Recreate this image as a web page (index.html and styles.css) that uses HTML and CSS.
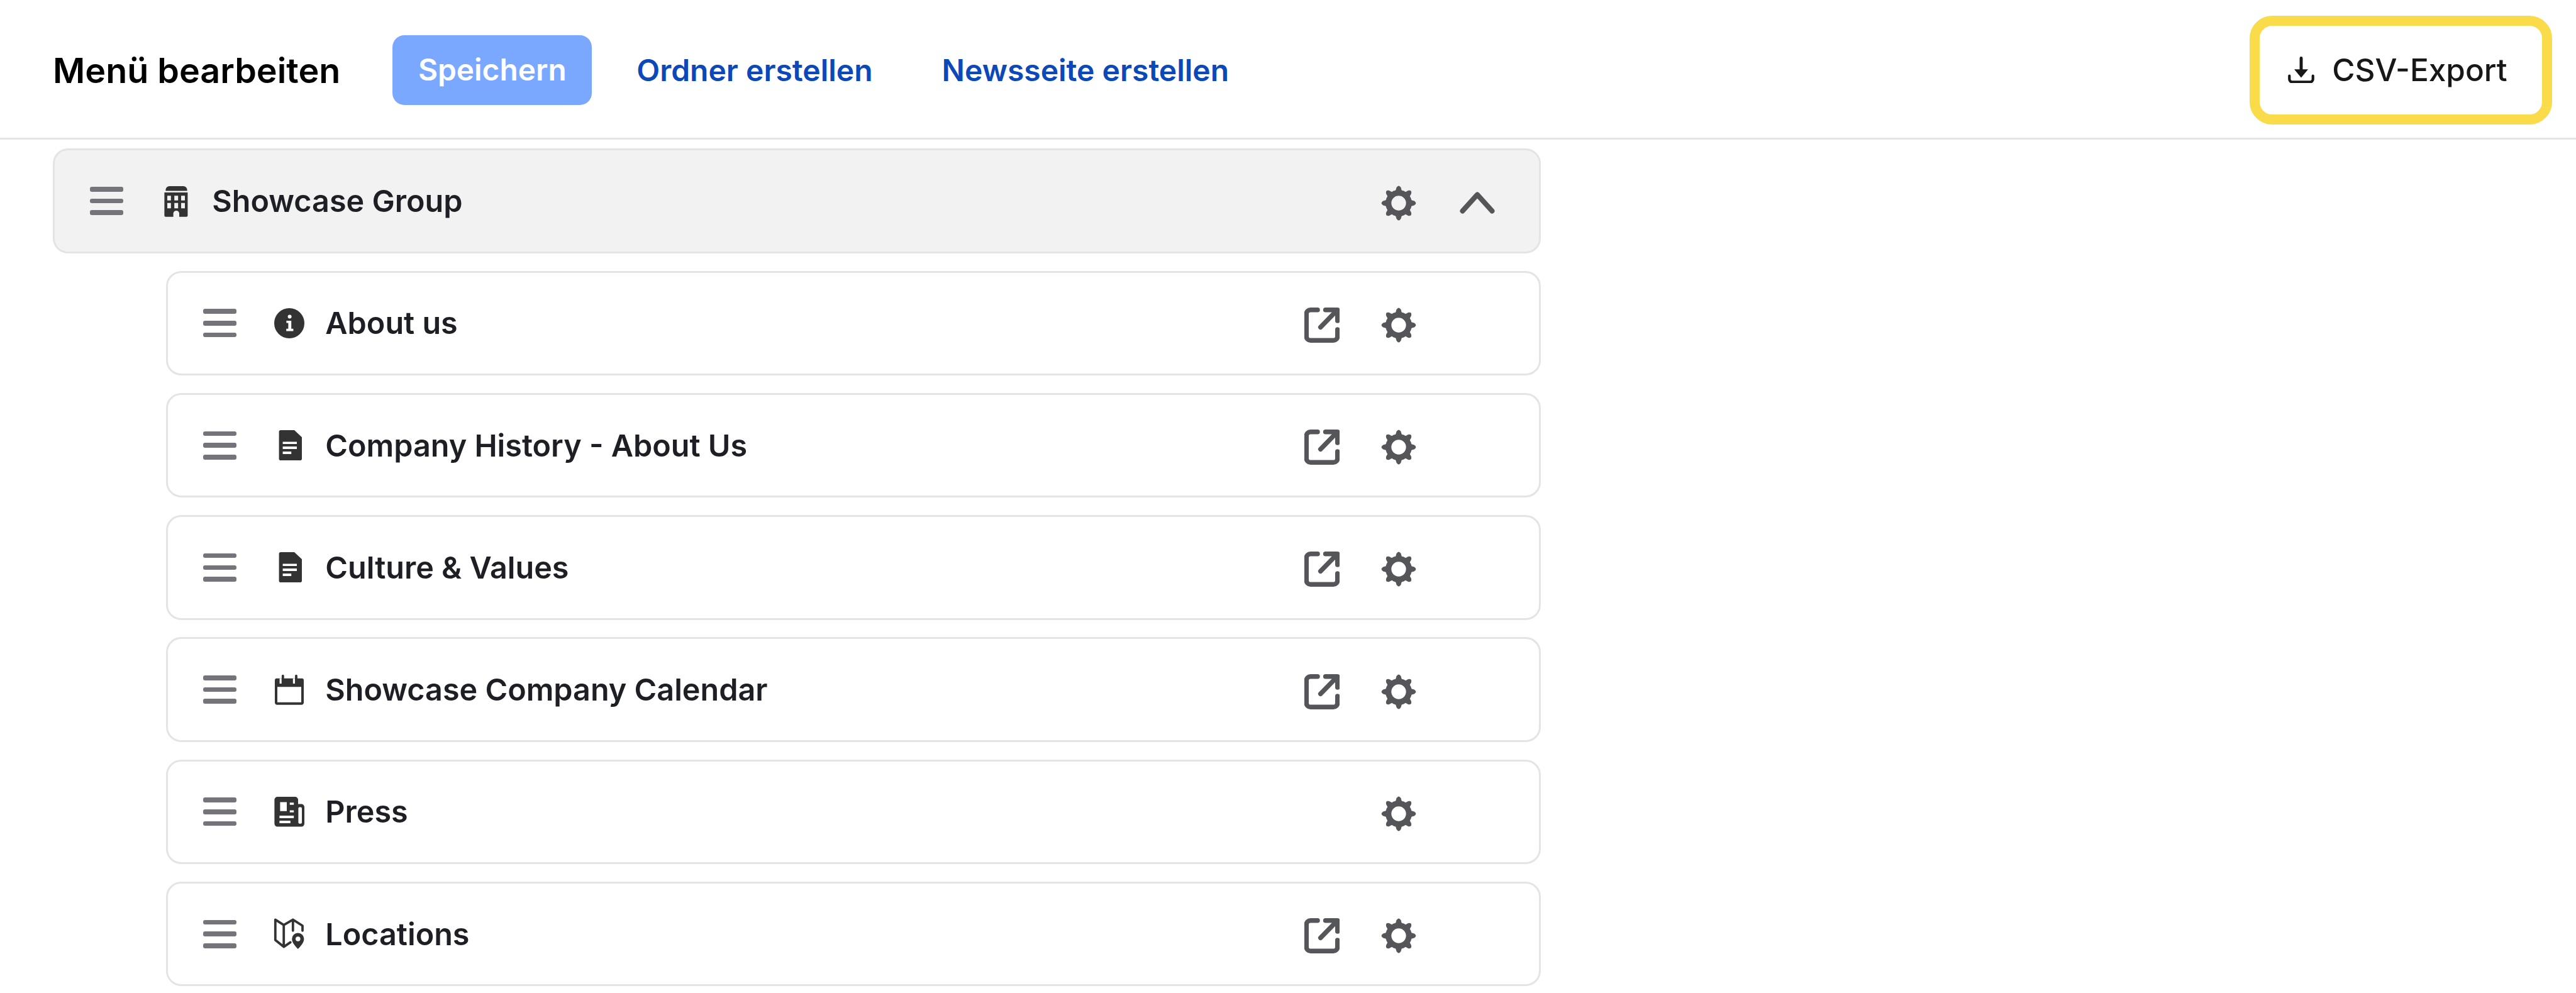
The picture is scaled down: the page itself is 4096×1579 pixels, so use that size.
FILE: index.html
```html
<!DOCTYPE html>
<html lang="de">
<head>
<meta charset="utf-8">
<title>Menü bearbeiten</title>
<link rel="stylesheet" href="styles.css">
</head>
<body>
<svg class="defs" aria-hidden="true">
  <symbol id="gear" viewBox="0 0 24 24">
    <path fill-rule="evenodd" d="M12 3a9 9 0 1 0 0 18a9 9 0 1 0 0-18zM12 7a5 5 0 1 1 0 10a5 5 0 1 1 0-10z"/>
    <g id="teeth">
      <path id="tooth" d="M9.5 4.8L10.5 1.4Q12-.9 13.5 1.4L14.5 4.8Z"/>
      <use href="#tooth" transform="rotate(45 12 12)"/>
      <use href="#tooth" transform="rotate(90 12 12)"/>
      <use href="#tooth" transform="rotate(135 12 12)"/>
      <use href="#tooth" transform="rotate(180 12 12)"/>
      <use href="#tooth" transform="rotate(225 12 12)"/>
      <use href="#tooth" transform="rotate(270 12 12)"/>
      <use href="#tooth" transform="rotate(315 12 12)"/>
    </g>
  </symbol>
  <symbol id="link" viewBox="0 0 24 24">
    <path class="line" d="M9 1.6H4.2A2.8 2.8 0 0 0 1.4 4.4V19.6A2.8 2.8 0 0 0 4.2 22.4H19.8A2.8 2.8 0 0 0 22.6 19.6V15M14.4 1.6H22.6V9M22.2 2L11 13.4"/>
  </symbol>
  <symbol id="doc" viewBox="0 0 24 24">
    <path d="M3.8 1.4A1.4 1.4 0 0 1 5.2 0H16L22 5.6V22.6A1.4 1.4 0 0 1 20.6 24H5.2A1.4 1.4 0 0 1 3.8 22.6Z"/>
    <path class="cut" d="M6.8 9.2H18V11H6.8ZM6.8 13H18V15H6.8ZM6.8 17H13.6V19H6.8Z"/>
  </symbol>
</svg>

<header class="topbar">
  <h1 class="title">Menü bearbeiten</h1>
  <button class="btn-save">Speichern</button>
  <a class="btn-link">Ordner erstellen</a>
  <a class="btn-link">Newsseite erstellen</a>
  <button class="btn-export">
    <svg class="ico-download" viewBox="0 0 24 24">
      <path class="tray" d="M1.3 17.5V20.6A2.4 2.4 0 0 0 3.7 23H20.3A2.4 2.4 0 0 0 22.7 20.6V17.5"/>
      <path d="M10.6 1.4A1.4 1.4 0 0 1 13.4 1.4V11.6H18.3L12 19.2L5.7 11.6H10.6Z"/>
    </svg>
    CSV-Export
  </button>
</header>

<main class="tree">
  <div class="row row-group">
    <span class="grip"><i></i><i></i><i></i></span>
    <svg class="ico" viewBox="0 0 24 24">
      <path d="M3.7 3.7V3A3 3 0 0 1 6.7 0H17.8A3 3 0 0 1 20.8 3V3.7Z"/>
      <path d="M2.7 5H21.2V23.4A1 1 0 0 1 20.2 24.4H14.5V21.8A2.35 2.35 0 0 0 9.8 21.8V24.4H3.7A1 1 0 0 1 2.7 23.4Z"/>
      <path class="cut" d="M5 7.6H7.9V11.4H5ZM10.6 7.6H13.6V11.4H10.6ZM16 7.6H19V11.4H16ZM5 13.4H7.9V17.6H5ZM10.6 13.4H13.6V17.6H10.6ZM16 13.4H19V17.6H16Z"/>
    </svg>
    <span class="label">Showcase Group</span>
    <span class="actions">
      <span class="slot"></span>
      <svg class="slot"><use href="#gear"/></svg>
      <span class="slot slot-chev">
        <svg class="ico-chev" viewBox="0 0 56 35"><path d="M4.5 30.5L28 4.5L51.5 30.5"/></svg>
      </span>
    </span>
  </div>

  <div class="row row-child">
    <span class="grip"><i></i><i></i><i></i></span>
    <svg class="ico" viewBox="0 0 24 24">
      <circle cx="12" cy="12" r="12"/>
      <circle class="cut" cx="12.3" cy="6.7" r="1.5"/>
      <path class="cut" d="M9.7 10H13.6V16.4H15.2V18.2H9.6V16.4H11.2V11.8H9.7Z"/>
    </svg>
    <span class="label">About us</span>
    <span class="actions">
      <svg class="slot"><use href="#link"/></svg>
      <svg class="slot"><use href="#gear"/></svg>
      <span class="slot"></span>
    </span>
  </div>

  <div class="row row-child">
    <span class="grip"><i></i><i></i><i></i></span>
    <svg class="ico"><use href="#doc"/></svg>
    <span class="label">Company History - About Us</span>
    <span class="actions">
      <svg class="slot"><use href="#link"/></svg>
      <svg class="slot"><use href="#gear"/></svg>
      <span class="slot"></span>
    </span>
  </div>

  <div class="row row-child">
    <span class="grip"><i></i><i></i><i></i></span>
    <svg class="ico"><use href="#doc"/></svg>
    <span class="label">Culture &amp; Values</span>
    <span class="actions">
      <svg class="slot"><use href="#link"/></svg>
      <svg class="slot"><use href="#gear"/></svg>
      <span class="slot"></span>
    </span>
  </div>

  <div class="row row-child">
    <span class="grip"><i></i><i></i><i></i></span>
    <svg class="ico" viewBox="0 0 24 24">
      <rect class="outline" x="1.5" y="4" width="21" height="18.9" rx="1"/>
      <path d="M.6 9.6V4A1.2 1.2 0 0 1 1.8 2.9H22.2A1.2 1.2 0 0 1 23.4 4V9.6Z"/>
      <path class="notch" d="M5.1 3V7M15.7 3V7"/>
      <path class="tab" d="M6.9.8V6.4M17.5.8V6.4"/>
    </svg>
    <span class="label">Showcase Company Calendar</span>
    <span class="actions">
      <svg class="slot"><use href="#link"/></svg>
      <svg class="slot"><use href="#gear"/></svg>
      <span class="slot"></span>
    </span>
  </div>

  <div class="row row-child">
    <span class="grip"><i></i><i></i><i></i></span>
    <svg class="ico" viewBox="0 0 24 24">
      <path d="M.2 2.4A2.4 2.4 0 0 1 2.6 0H16.6A2.4 2.4 0 0 1 19 2.4V5.8H21.6A2.4 2.4 0 0 1 24 8.2V21.4A2.4 2.4 0 0 1 21.6 23.8H2.6A2.4 2.4 0 0 1 .2 21.4Z"/>
      <path class="cut" d="M4.7 4.3H10V11.4H4.7ZM12.4 4.6H15.6V6.4H12.4ZM12.4 10.7H15.6V12.4H12.4ZM4.2 15H15.6V17H4.2ZM4.2 19H12.9V21H4.2Z"/>
      <rect class="cut" x="19.2" y="8.2" width="2.8" height="13.2" rx="1"/>
    </svg>
    <span class="label">Press</span>
    <span class="actions">
      <span class="slot"></span>
      <svg class="slot"><use href="#gear"/></svg>
      <span class="slot"></span>
    </span>
  </div>

  <div class="row row-child">
    <span class="grip"><i></i><i></i><i></i></span>
    <svg class="ico" viewBox="0 0 24 24">
      <path class="map" d="M22.5 9.4V5.5L14.9.7L7.6 4.9L.9.7V16.9L7.6 22.3L12.9 18.7M7.6 4.9V22.3M14.9.7V9.4"/>
      <path fill-rule="evenodd" d="M18.9 11.2A4.8 4.8 0 0 1 23.7 16C23.7 19 20.8 22 18.9 24C17 22 14.1 19 14.1 16A4.8 4.8 0 0 1 18.9 11.2ZM18.9 14.1A1.9 1.9 0 1 0 18.9 17.9A1.9 1.9 0 1 0 18.9 14.1Z"/>
    </svg>
    <span class="label">Locations</span>
    <span class="actions">
      <svg class="slot"><use href="#link"/></svg>
      <svg class="slot"><use href="#gear"/></svg>
      <span class="slot"></span>
    </span>
  </div>
</main>
</body>
</html>
```
FILE: styles.css
```css
* { box-sizing: border-box; }
html, body { margin: 0; padding: 0; background: #fff; }
body { font-family: Inter, "Liberation Sans", sans-serif; overflow: hidden; }

.defs { position: absolute; width: 0; height: 0; }

.topbar {
  display: flex;
  align-items: center;
  height: 222px;
  padding: 3px 38px 0 84px;
  border-bottom: 3.2px solid #e5e5e5;
}
.title {
  margin: 0 83px 0 0;
  font-size: 55.6px;
  font-weight: 600;
  color: #000;
  white-space: nowrap;
}
.btn-save {
  width: 317px;
  height: 111px;
  margin-right: 71px;
  border: 0;
  border-radius: 19px;
  background: #7aa7ff;
  color: #fff;
  font: 600 47.8px Inter, sans-serif;
}
.btn-link {
  margin-right: 110px;
  color: #0b48b8;
  font-size: 48px;
  font-weight: 600;
  white-space: nowrap;
}
.btn-export {
  display: flex;
  align-items: center;
  justify-content: center;
  gap: 28px;
  width: 481px;
  height: 173px;
  margin-left: auto;
  padding: 0 10px 0 0;
  border: 16.6px solid #fadc4b;
  border-radius: 36px;
  background: #fff;
  color: #171717;
  font: 500 49.5px Inter, sans-serif;
}
.ico-download { width: 42px; height: 42px; fill: #171717; }
.ico-download .tray { fill: none; stroke: #171717; stroke-width: 2.4; stroke-linecap: round; }

.tree {
  display: flex;
  flex-direction: column;
  gap: 27.75px;
  padding-top: 14.3px;
  width: 2450px;
}
.row {
  display: flex;
  align-items: center;
  flex: none;
  height: 166.5px;
  border: 3.2px solid #e4e4e4;
  border-radius: 24px;
  padding-left: 56.3px;
  background: #fff;
}
.row-group { margin-left: 84px; background: #f2f2f2; }
.row-child { margin-left: 264px; }

.grip {
  display: flex;
  flex-direction: column;
  justify-content: space-between;
  flex: none;
  width: 53px;
  height: 45px;
  margin-right: 60px;
}
.grip i { display: block; height: 7.6px; border-radius: 3px; background: #74757a; }

.ico {
  flex: none;
  width: 48px;
  height: 48px;
  overflow: visible;
  fill: #333;
  margin-right: 33px;
}
.cut { fill: #fff; }
.row-group .cut { fill: #f2f2f2; }
.ico .outline { fill: none; stroke: #333; stroke-width: 2; }
.ico .notch { fill: none; stroke: #fff; stroke-width: 1.6; }
.ico .tab { fill: none; stroke: #333; stroke-width: 1.9; stroke-linecap: round; }
.ico .map { fill: none; stroke: #333; stroke-width: 1.9; stroke-linecap: round; stroke-linejoin: round; }

.label {
  flex: 1;
  color: #1d1f24;
  font-size: 48.5px;
  font-weight: 600;
  white-space: nowrap;
}
.actions {
  display: flex;
  align-items: center;
  gap: 66px;
  flex: none;
  margin-right: 70px;
  padding-top: 6px;
}
.slot {
  display: block;
  flex: none;
  width: 56px;
  height: 56px;
  fill: #55565a;
  color: #55565a;
}
.actions > .slot:last-child { margin-left: 3px; }
.line { fill: none; stroke: #55565a; stroke-width: 3.2; stroke-linecap: round; stroke-linejoin: round; }
.slot-chev { display: flex; align-items: center; }
.ico-chev { width: 56px; height: 35px; fill: none; stroke: #55565a; stroke-width: 8; stroke-linecap: round; stroke-linejoin: round; }
```
